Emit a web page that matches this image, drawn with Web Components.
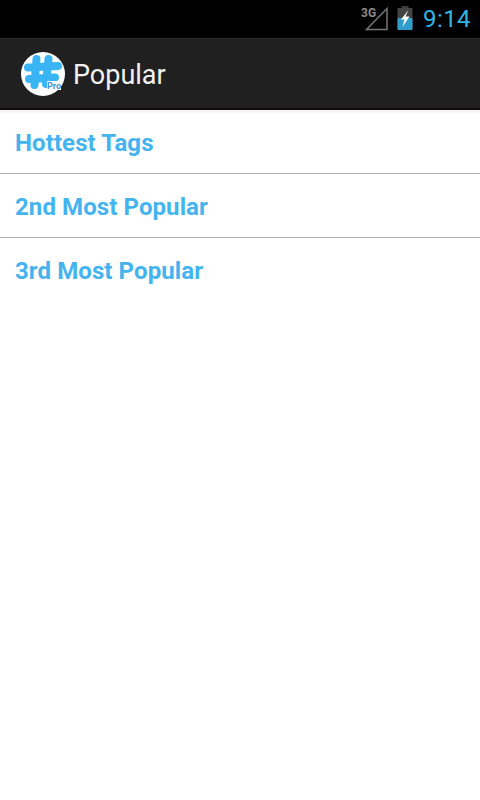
<!DOCTYPE html>
<html><head><meta charset="utf-8"><style>
html,body{margin:0;padding:0;background:#fff}
body{width:480px;height:800px;overflow:hidden;font-family:Roboto,sans-serif;display:flex;flex-direction:column}
</style></head><body>
<status-bar></status-bar>
<action-bar label="Popular"></action-bar>
<tag-list>
<tag-row>Hottest Tags</tag-row>
<tag-row>2nd Most Popular</tag-row>
<tag-row last>3rd Most Popular</tag-row>
</tag-list>
<script>
class Base extends HTMLElement{
  constructor(){super();this.attachShadow({mode:'open'}).innerHTML=this.constructor.markup;}
}
class StatusBar extends Base{static markup=`<style>
:host{display:flex;height:38px;background:#000;align-items:center;justify-content:flex-end;box-sizing:border-box;padding-right:9px;flex:none}
svg{display:block}
.s{position:relative;width:30px;height:30px;margin-right:8px}
.g{position:absolute;left:2px;top:2px;font:700 12px/14px "Roboto",sans-serif;color:#8c8c8c}
.b{margin-bottom:2px}
.t{font:400 24px/38px Roboto,sans-serif;color:#33b5e5;margin-left:10px;letter-spacing:.4px}
</style>
<div class="s"><span class="g">3G</span>
<svg width="30" height="30" viewBox="0 0 30 30"><path d="M7.500 25.500 L28 4.500 V25.500 Z" fill="none" stroke="#777" stroke-width="1.500"/></svg></div>
<svg class="b" width="16" height="24" viewBox="0 0 16 24"><rect x="4.500" y="0" width="7" height="3" fill="#3c3c3c"/><rect x="0.500" y="2" width="15" height="22" rx="1" fill="#444"/><rect x="0.500" y="12" width="15" height="12" rx="1" fill="#2f9ccb"/><path d="M11.500 4 L4 13.500 H7.500 L5.500 21 L12.500 10.500 H8.500 Z" fill="#fff"/></svg>
<span class="t">9:14</span>`}
class ActionBar extends Base{static markup=`<style>
:host{display:flex;height:72px;box-sizing:border-box;background:#202020;border-top:1px solid #2c2c2c;border-bottom:2px solid #0c0c0c;align-items:center;padding-left:21px;flex:none}
svg{display:block;margin-right:8px;overflow:visible}
.l{font:400 27px/1 Roboto,sans-serif;color:#f2f2f2;padding-top:4px}
</style>
<svg width="44" height="44" viewBox="0 0 44 44"><circle cx="22" cy="22" r="22" fill="#fff"/>
<path d="M15.500 7 L13.500 33 M27.500 7 L25 32 M7 15.500 L37 14 M8 27 L34 25.500" fill="none" stroke="#39b5f5" stroke-width="8" stroke-linecap="round"/>
<rect x="26" y="29" width="14" height="9" fill="#fff"/>
<text x="26" y="37" font-family="Roboto,sans-serif" font-size="9" font-weight="700" fill="#3f93d2">Pro</text></svg>
<span class="l"><slot></slot></span>`;
connectedCallback(){this.textContent=this.getAttribute('label')}}
class TagList extends Base{static markup=`<style>:host{display:block;flex:1;background:#fff;position:relative}
.shade{position:absolute;left:0;right:0;top:0;height:4px;background:linear-gradient(#efebef,#fff)}</style><div class="shade"></div><slot></slot>`}
class TagRow extends Base{static markup=`<style>
:host{display:flex;position:relative;height:64px;box-sizing:border-box;align-items:center;padding:2px 15px 0;border-bottom:1px solid #b4b4b4;font:700 24px/1 Roboto,sans-serif;letter-spacing:.09px;color:#44b4f0}
:host([last]){border-bottom:0}
</style><slot></slot>`}
customElements.define('status-bar',StatusBar);
customElements.define('action-bar',ActionBar);
customElements.define('tag-list',TagList);
customElements.define('tag-row',TagRow);
</script>
</body></html>
